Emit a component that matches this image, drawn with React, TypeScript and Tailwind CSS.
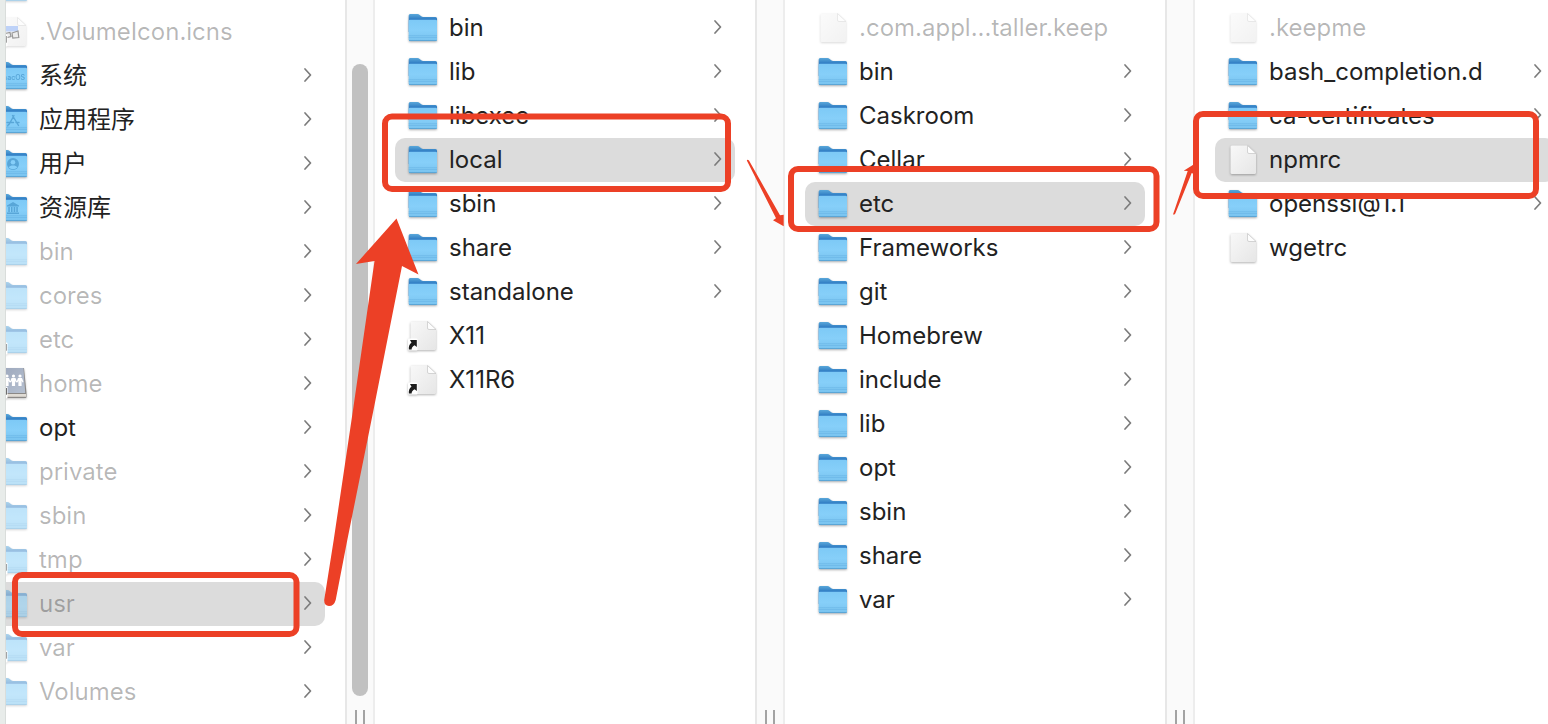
import { useState } from "react";
import clsx from "clsx";

type Kind = "folder" | "file" | "home" | "image";
type Glyph = "macos" | "apps" | "user" | "library";

interface Entry {
  name: string;
  kind?: Kind;
  glyph?: Glyph;
  dim?: boolean;
  alias?: boolean;
}

const ROOT: Entry[] = [
  { name: ".VolumeIcon.icns", kind: "image", dim: true, alias: true },
  { name: "系统", glyph: "macos" },
  { name: "应用程序", glyph: "apps" },
  { name: "用户", glyph: "user" },
  { name: "资源库", glyph: "library" },
  { name: "bin", dim: true },
  { name: "cores", dim: true },
  { name: "etc", dim: true, alias: true },
  { name: "home", kind: "home", dim: true, alias: true },
  { name: "opt" },
  { name: "private", dim: true },
  { name: "sbin", dim: true },
  { name: "tmp", dim: true, alias: true },
  { name: "usr", dim: true },
  { name: "var", dim: true, alias: true },
  { name: "Volumes", dim: true },
];

const USR: Entry[] = [
  { name: "bin" },
  { name: "lib" },
  { name: "libexec" },
  { name: "local" },
  { name: "sbin" },
  { name: "share" },
  { name: "standalone" },
  { name: "X11", kind: "file", alias: true },
  { name: "X11R6", kind: "file", alias: true },
];

const LOCAL: Entry[] = [
  { name: ".com.appl...taller.keep", kind: "file", dim: true },
  { name: "bin" },
  { name: "Caskroom" },
  { name: "Cellar" },
  { name: "etc" },
  { name: "Frameworks" },
  { name: "git" },
  { name: "Homebrew" },
  { name: "include" },
  { name: "lib" },
  { name: "opt" },
  { name: "sbin" },
  { name: "share" },
  { name: "var" },
];

const ETC: Entry[] = [
  { name: ".keepme", kind: "file", dim: true },
  { name: "bash_completion.d" },
  { name: "ca-certificates" },
  { name: "npmrc", kind: "file" },
  { name: "openssl@1.1" },
  { name: "wgetrc", kind: "file" },
];

function Gradients() {
  return (
    <svg className="absolute size-0" aria-hidden="true">
      <defs>
        <linearGradient id="folder-back" x1="0" y1="0" x2="0" y2="1">
          <stop offset="0" stopColor="#5aa8da" />
          <stop offset="0.3" stopColor="#2f7cc3" />
          <stop offset="1" stopColor="#2f7cc3" />
        </linearGradient>
        <linearGradient id="folder-front" x1="0" y1="0" x2="0" y2="1">
          <stop offset="0" stopColor="#7dc9f6" />
          <stop offset="0.5" stopColor="#86cff9" />
          <stop offset="1" stopColor="#79c3ef" />
        </linearGradient>
        <linearGradient id="paper" x1="0" y1="0" x2="1" y2="1">
          <stop offset="0" stopColor="#f8f8f8" />
          <stop offset="1" stopColor="#e6e6e6" />
        </linearGradient>
        <linearGradient id="book" x1="0" y1="0" x2="1" y2="1">
          <stop offset="0" stopColor="#8391ab" />
          <stop offset="1" stopColor="#a5b2c6" />
        </linearGradient>
      </defs>
    </svg>
  );
}

function FolderGlyph({ glyph }: { glyph: Glyph }) {
  if (glyph === "macos") {
    return (
      <text x="16" y="19.5" fontSize="7" fontWeight="600" textAnchor="middle" fill="#58a6d8">
        macOS
      </text>
    );
  }
  if (glyph === "apps") {
    return (
      <path
        d="M17 11.5l-5 9M15.500 11.500l6 10M10 18.500h6.500M19 18.500h3M11.500 20.500l-.8 1.300"
        fill="none"
        stroke="#58a6d8"
        strokeWidth="1.4"
        strokeLinecap="round"
      />
    );
  }
  if (glyph === "user") {
    return (
      <>
        <circle cx="16" cy="16" r="6" fill="#58a6d8" />
        <circle cx="16" cy="14.2" r="2.3" fill="#86cff9" />
        <path d="M11.800 19.400c1-2.400 7.400-2.400 8.400 0-2 2.300-6.400 2.300-8.400 0z" fill="#86cff9" />
      </>
    );
  }
  return (
    <path
      d="M10 13.500l6-3.500 6 3.500v1H10zM11.300 15h1.500v5h-1.500zM14 15h1.500v5H14zM16.700 15h1.500v5h-1.500zM19.300 15h1.500v5h-1.500zM10 20.500h12V22H10z"
      fill="#58a6d8"
    />
  );
}

function AliasBadge() {
  return (
    <>
      <rect x="1" y="18.500" width="9.500" height="12" rx="1" fill="#fff" />
      <path
        d="M1.800 29.500c-.3-3.600.9-5.600 2.700-6.800L3 20h6.800v7L7.600 25.300c-1.800 1-2.900 2.200-3 4.200z"
        fill="#1c1c1c"
      />
    </>
  );
}

function EntryIcon({ entry }: { entry: Entry }) {
  const kind = entry.kind ?? "folder";
  return (
    <svg
      viewBox="0 0 32 32"
      className={clsx(
        "size-8 shrink-0 drop-shadow-[0_1px_1px_rgba(0,0,0,0.3)]",
        entry.dim && (kind === "home" ? "opacity-80" : "opacity-50")
      )}
      aria-hidden="true"
    >
      {kind === "folder" && (
        <>
          <path
            d="M1.700 3.500Q1.700 2 3.200 2h7.300q1.200 0 2.200.9l1.500 1.400q.8.700 2 .7h12.300q1.500 0 1.500 1.500V20H1.700z"
            fill="url(#folder-back)"
          />
          <path
            d="M1.700 9q0-1.300 1.300-1.300h25.700q1.300 0 1.300 1.300v18.500q0 1.500-1.500 1.500H3.200q-1.500 0-1.500-1.500z"
            fill="url(#folder-front)"
          />
          <path d="M1.700 23.700H30M1.700 25.500H30" stroke="#6ab6e6" strokeWidth="0.7" />
          <path d="M2 28.600h27.700" stroke="#559fd0" strokeWidth="0.9" />
          {entry.glyph && <FolderGlyph glyph={entry.glyph} />}
        </>
      )}
      {(kind === "file" || kind === "image") && (
        <>
          <path
            d="M3.500 3q0-1.500 1.500-1.500h15.500L29 9.500V28.500q0 1.500-1.500 1.500H5q-1.500 0-1.500-1.500z"
            fill="url(#paper)"
          />
          <path d="M20.500 1.500V8q0 1.500 1.500 1.500h7z" fill="#fdfdfd" stroke="#c4c4c4" strokeWidth="0.7" />
        </>
      )}
      {kind === "image" && (
        <>
          <rect x="7" y="10" width="14" height="5.500" fill="#7fa6f2" />
          <path d="M8 17.500l5-1 1 4-6 1.500zM15 17l6-2 .8 6.500-6 .5z" fill="#ddd" stroke="#333" strokeWidth="1.2" />
        </>
      )}
      {kind === "home" && (
        <>
          <path d="M3 0h24l2.500 25v4q0 1-1 1H2V25z" fill="#6f6c6a" />
          <path d="M3 0h23.500l1.700 25H2z" fill="url(#book)" />
          <path d="M2 26h27v2.800H2z" fill="#d9d4cb" />
          <g fill="#fff">
            <circle cx="10" cy="8" r="1.6" />
            <circle cx="16.5" cy="8" r="1.6" />
            <circle cx="23" cy="8" r="1.6" />
            <path d="M8 10h4l1.500 4-1 .5-.9-1.800V18H8.400v-5.300l-.9 1.800-1-.5zM14.500 10h4l1.500 4-1 .5-.9-1.800V18h-3.200v-5.300l-.9 1.800-1-.5zM21 10h4l1.500 4-1 .5-.9-1.800V18h-3.200v-5.300l-.9 1.800-1-.5z" />
          </g>
        </>
      )}
      {entry.alias && <AliasBadge />}
    </svg>
  );
}

function Chevron() {
  return (
    <svg viewBox="0 0 12 20" className="h-5 w-3 shrink-0" aria-hidden="true">
      <path
        d="M4 3l5.500 6L4 15"
        fill="none"
        stroke="#7c7c7c"
        strokeWidth="1.7"
        strokeLinecap="round"
        strokeLinejoin="round"
      />
    </svg>
  );
}

interface ColumnProps {
  label: string;
  entries: Entry[];
  initial: string;
  className?: string;
}

function Column({ label, entries, initial, className }: ColumnProps) {
  const [selected, setSelected] = useState(initial);

  return (
    <ul aria-label={label} className={clsx("shrink-0 px-5", className)}>
      {entries.map((entry) => {
        const kind = entry.kind ?? "folder";
        return (
          <li key={entry.name}>
            <button
              type="button"
              aria-pressed={selected === entry.name}
              onClick={() => setSelected(entry.name)}
              className={clsx(
                "flex h-11 w-full items-center gap-2.5 rounded-[10px] px-3 text-left",
                selected === entry.name && "bg-[#dcdcdc]"
              )}
            >
              <EntryIcon entry={entry} />
              <span className={clsx("flex-1 whitespace-nowrap", entry.dim ? "text-black/28" : "text-[#222]")}>
                {entry.name}
              </span>
              {(kind === "folder" || kind === "home") && <Chevron />}
            </button>
          </li>
        );
      })}
    </ul>
  );
}

function Gutter({ thumb = false }: { thumb?: boolean }) {
  return (
    <div className="flex w-[30px] shrink-0 flex-col items-center gap-3.5 border-x-2 border-l-[#e7e7e7] border-r-[#ededed] bg-[#fafafa] pt-16">
      <div className={clsx("w-4 flex-1 rounded-full", thumb && "bg-[#c1c1c1]")} />
      {/* Resize handle */}
      <div className="h-3.5 w-2.5 border-x-2 border-[#a3a3a3]" />
    </div>
  );
}

function Annotations() {
  return (
    <svg
      width="1548"
      height="724"
      viewBox="0 0 1548 724"
      className="pointer-events-none absolute top-0 left-0 max-w-none"
      aria-hidden="true"
    >
      <g fill="none" stroke="#ec4026" strokeWidth="6">
        <rect x="15" y="575" width="281.500" height="59" rx="7" />
        <rect x="385" y="116.500" width="343" height="72.500" rx="7" />
        <rect x="791" y="169" width="365.500" height="60" rx="7" />
        <rect x="1196" y="114" width="340" height="82" rx="7" />
      </g>
      <g fill="#ec4026">
        <path d="M396.500 218.500L418.500 274.500 402 266 373.500 410 347.300 540 335.700 600Q334 606 329 606 324 605.500 324.200 600L333.700 540 353 410 374.500 261 356 264z" />
        <path d="M746.800 160.500Q747.500 159 749 160.500L780 215.300 783.700 214.700V226.300L773 220.300 776 218.300z" />
        <path d="M1173 214.500Q1175 215 1175.500 213L1191.700 173 1196 175V163L1183.700 170.700 1187.700 171z" />
      </g>
    </svg>
  );
}

export default function App() {
  return (
    <main className="relative flex h-screen overflow-hidden bg-white font-['Inter','Noto_Sans_CJK_SC',sans-serif] text-2xl leading-8">
      <Gradients />
      <div className="w-1.5 shrink-0 border-r border-[#d9dddb] bg-[#e8ecea]" />
      {/* First column is scrolled sideways and down */}
      <div className="flex w-[339px] shrink-0 flex-col items-end overflow-hidden">
        <div className="flex h-2.5 w-[380px] shrink-0 items-end px-8 pb-1.5">
          <EntryIcon entry={{ name: "", dim: true }} />
        </div>
        <Column label="/" entries={ROOT} initial="usr" className="w-[380px]" />
      </div>
      <Gutter thumb />
      <Column label="usr" entries={USR} initial="local" className="w-[380px] pt-1.5" />
      <Gutter />
      <Column label="local" entries={LOCAL} initial="etc" className="w-[380px] pt-1.5" />
      <Gutter />
      <Column label="etc" entries={ETC} initial="npmrc" className="min-w-[380px] flex-1 pt-1.5" />
      <Annotations />
    </main>
  );
}
